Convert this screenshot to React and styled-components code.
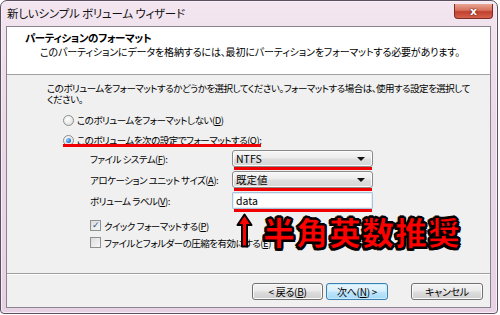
import React from "react"
import styled, { createGlobalStyle } from "styled-components"

const GlobalStyle = createGlobalStyle`
    html, body {
        margin: 0;
        padding: 0;
        background: #ffffff;
    }
    body {
        font-family: "Noto Sans CJK JP", "Noto Sans", sans-serif;
        font-size: 10px;
        color: #000;
        font-feature-settings: "palt";
    }
`

const Window = styled.div`
    width: 496px;
    height: 312px;
    border: 1px solid #5a5060;
    border-radius: 7px 7px 4px 4px;
    background: linear-gradient(180deg, #f3e6f0 0%, #ead8e7 40%, #e6d2e3 100%);
    display: flex;
    flex-direction: column;
    box-shadow: inset 0 0 0 1px #f8eff6;
`

const TitleBar = styled.div`
    height: 25px;
    display: flex;
    align-items: flex-start;
    justify-content: space-between;
    padding: 0 4px 0 6px;
`

const Caption = styled.div`
    margin-top: 5px;
    font-size: 11.5px;
    line-height: 14px;
    letter-spacing: -0.2px;
    color: #111;
`

const CloseButton = styled.div`
    margin-top: 3px;
    width: 37px;
    height: 14px;
    border: 1px solid #7c2d26;
    border-top: none;
    border-radius: 0 0 4px 4px;
    background: linear-gradient(180deg, #e8a593 0%, #d7705e 45%, #c2402f 55%, #d5614d 100%);
    display: flex;
    align-items: center;
    justify-content: center;
    color: #fff;
    font-family: "DejaVu Sans", sans-serif;
    font-weight: 700;
    font-size: 11px;
    line-height: 1;
    text-shadow: 0 0 2px #5a1a12, 0 0 1px #5a1a12;
`

const Client = styled.div`
    flex: 1;
    margin: 0 6px 5px 5px;
    border: 1px solid #8b8490;
    background: #f0f0f0;
    display: flex;
    flex-direction: column;
`

const Header = styled.div`
    height: 48px;
    box-sizing: border-box;
    background: #ffffff;
    border-bottom: 1px solid #a0a0a0;
    padding: 4px 0 0 18px;
`

const HeaderTitle = styled.div`
    font-weight: 700;
    font-size: 10.5px;
    line-height: 14px;
    letter-spacing: -0.4px;
`

const HeaderText = styled.div`
    margin-left: 15px;
    line-height: 14px;
    letter-spacing: -0.15px;
    white-space: nowrap;
`

const Body = styled.div`
    flex: 1;
    position: relative;
    padding: 8px 0 0 40px;
    border-bottom: 1px solid #a0a0a0;
    box-shadow: 0 1px 0 #fff;
    font-size: 9.5px;
    letter-spacing: -0.5px;
`

const Lead = styled.div`
    line-height: 11px;
    white-space: nowrap;
`

const Options = styled.div`
    margin-top: 5px;
    padding-left: 16px;
    display: flex;
    flex-direction: column;
`

const OptionRow = styled.label`
    position: relative;
    align-self: flex-start;
    height: 20px;
    display: flex;
    align-items: center;
    gap: 3px;
    white-space: nowrap;

    &::after {
        content: "";
        display: ${({ $marked }) => ($marked ? "block" : "none")};
        position: absolute;
        left: 0;
        right: 0;
        bottom: 3px;
        height: 3px;
        background: #f00000;
    }
`

const Radio = styled.span`
    width: 9px;
    height: 9px;
    border-radius: 50%;
    border: 1px solid #8d8d8d;
    background: radial-gradient(circle at 40% 35%, #ffffff 0%, #e4e4e4 70%, #d4d4d4 100%);
    display: flex;
    align-items: center;
    justify-content: center;

    &::before {
        content: "";
        display: ${({ $checked }) => ($checked ? "block" : "none")};
        width: 5px;
        height: 5px;
        border-radius: 50%;
        background: radial-gradient(circle at 35% 35%, #8fd3ff 0%, #2a7fd0 60%, #134f9a 100%);
    }
`

const Underline = styled.u`
    text-underline-offset: 1px;
`

const Form = styled.div`
    display: grid;
    grid-template-columns: 142px 141px;
    grid-auto-rows: 17px;
    row-gap: 4px;
    align-items: center;
    margin-left: 43px;
`

const FieldLabel = styled.div`
    white-space: nowrap;
`

const Control = styled.div`
    position: relative;
    height: 17px;
    box-sizing: border-box;
    border: 1px solid ${({ $input }) => ($input ? "#a8c4dc" : "#8a8a8a")};
    border-radius: ${({ $input }) => ($input ? "1px" : "3px")};
    background: ${({ $input }) =>
        $input ? "#ffffff" : "linear-gradient(180deg, #f7f7f7 0%, #ececec 48%, #dedede 52%, #d6d6d6 100%)"};
    box-shadow: inset 0 0 0 1px ${({ $input }) => ($input ? "#e6eef6" : "#fbfbfb")};
    display: flex;
    align-items: center;
    justify-content: space-between;
    padding: 0 7px 0 3px;
    font-size: 10.5px;
    letter-spacing: 0;

    &::after {
        content: "";
        position: absolute;
        left: 1px;
        right: 0;
        bottom: -4px;
        height: 3px;
        background: #f00000;
    }
`

const Caret = styled.span`
    width: 0;
    height: 0;
    border-left: 4px solid transparent;
    border-right: 4px solid transparent;
    border-top: 4px solid #111;
`

const Checks = styled.div`
    margin-top: 8px;
    margin-left: 43px;
    display: flex;
    flex-direction: column;
`

const CheckRow = styled.label`
    height: 17px;
    display: flex;
    align-items: center;
    gap: 3px;
    white-space: nowrap;
`

const Box = styled.span`
    width: 9px;
    height: 9px;
    border: 1px solid #8e8f8f;
    background: linear-gradient(135deg, #dcdcdc 0%, #f7f7f7 100%);
    display: flex;
    align-items: center;
    justify-content: center;
    color: #2b4f8a;
    font-family: "DejaVu Sans", sans-serif;
    font-size: 9px;
    line-height: 1;
    font-weight: 700;
`

const Annotation = styled.div`
    position: absolute;
    left: 229px;
    top: 138px;
    display: flex;
    align-items: center;
    gap: 10px;
`

const BigNote = styled.div`
    font-family: "Noto Sans CJK JP", sans-serif;
    font-weight: 900;
    font-size: 32px;
    line-height: 34px;
    color: #ff0000;
    letter-spacing: 1px;
    -webkit-text-stroke: 1px #000;
    text-shadow:
        2px 0 0 #000, -2px 0 0 #000, 0 2px 0 #000, 0 -2px 0 #000,
        1.5px 1.5px 0 #000, -1.5px 1.5px 0 #000, 1.5px -1.5px 0 #000, -1.5px -1.5px 0 #000;
`

const Footer = styled.div`
    height: 33px;
    display: flex;
    justify-content: flex-end;
    align-items: flex-start;
    padding: 9px 7px 0 0;
    box-sizing: border-box;
`

const Button = styled.div`
    width: ${({ $w }) => $w}px;
    height: 17px;
    box-sizing: border-box;
    margin-left: ${({ $gap }) => $gap}px;
    border: 1px solid ${({ $focus }) => ($focus ? "#3c7fb1" : "#707070")};
    border-radius: 3px;
    background: ${({ $focus }) =>
        $focus
            ? "linear-gradient(180deg, #eaf6fd 0%, #d9f0fc 48%, #bee6fd 52%, #a7d9f5 100%)"
            : "linear-gradient(180deg, #f2f2f2 0%, #ebebeb 48%, #dddddd 52%, #cfcfcf 100%)"};
    box-shadow: inset 0 0 0 1px ${({ $focus }) => ($focus ? "#c9ecfc" : "#fbfbfb")};
    display: flex;
    align-items: center;
    justify-content: center;
    letter-spacing: -0.3px;
`

const Arrow = () => (
    <svg width="17" height="35" viewBox="0 0 17 35">
        <path
            d="M8.5 1.5 L15.5 12 L11 12 L11 33.5 L6 33.5 L6 12 L1.5 12 Z"
            fill="#ff0000"
            stroke="#000"
            strokeWidth="2"
            strokeLinejoin="round"
        />
    </svg>
)

const App = () => {
    return (
        <>
            <GlobalStyle />
            <Window>
                <TitleBar>
                    <Caption>新しいシンプル ボリューム ウィザード</Caption>
                    <CloseButton>x</CloseButton>
                </TitleBar>
                <Client>
                    <Header>
                        <HeaderTitle>パーティションのフォーマット</HeaderTitle>
                        <HeaderText>このパーティションにデータを格納するには、最初にパーティションをフォーマットする必要があります。</HeaderText>
                    </Header>
                    <Body>
                        <Lead>このボリュームをフォーマットするかどうかを選択してください。フォーマットする場合は、使用する設定を選択して</Lead>
                        <Lead>ください。</Lead>
                        <Options>
                            <OptionRow>
                                <Radio />
                                <span>このボリュームをフォーマットしない(<Underline>D</Underline>)</span>
                            </OptionRow>
                            <OptionRow $marked>
                                <Radio $checked />
                                <span>このボリュームを次の設定でフォーマットする(<Underline>O</Underline>):</span>
                            </OptionRow>
                        </Options>
                        <Form>
                            <FieldLabel>ファイル システム(<Underline>F</Underline>):</FieldLabel>
                            <Control>
                                <span>NTFS</span>
                                <Caret />
                            </Control>
                            <FieldLabel>アロケーション ユニット サイズ(<Underline>A</Underline>):</FieldLabel>
                            <Control>
                                <span>既定値</span>
                                <Caret />
                            </Control>
                            <FieldLabel>ボリューム ラベル(<Underline>V</Underline>):</FieldLabel>
                            <Control $input>
                                <span>data</span>
                            </Control>
                        </Form>
                        <Checks>
                            <CheckRow>
                                <Box>✓</Box>
                                <span>クイック フォーマットする(<Underline>P</Underline>)</span>
                            </CheckRow>
                            <CheckRow>
                                <Box />
                                <span>ファイルとフォルダーの圧縮を有効にする(<Underline>E</Underline>)</span>
                            </CheckRow>
                        </Checks>
                        <Annotation>
                            <Arrow />
                            <BigNote>半角英数推奨</BigNote>
                        </Annotation>
                    </Body>
                    <Footer>
                        <Button $w={71} $gap={0}>&lt; 戻る(<Underline>B</Underline>)</Button>
                        <Button $w={62} $gap={3} $focus>次へ(<Underline>N</Underline>) &gt;</Button>
                        <Button $w={72} $gap={23}>キャンセル</Button>
                    </Footer>
                </Client>
            </Window>
        </>
    )
}

export default App
